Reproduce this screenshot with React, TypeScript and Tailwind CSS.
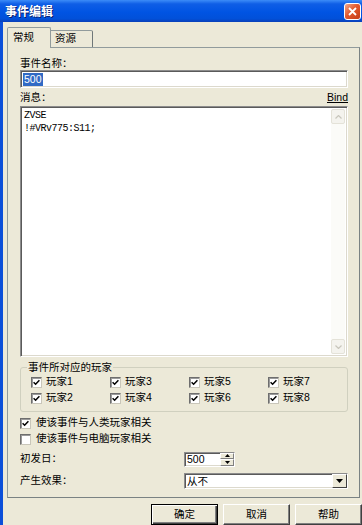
const players = ["玩家1", "玩家3", "玩家5", "玩家7", "玩家2", "玩家4", "玩家6", "玩家8"];

const sunken =
  "border border-t-[#8c8c8c] border-l-[#8c8c8c] border-b-white border-r-white shadow-[inset_1px_1px_0_#5a5a5a,inset_-1px_-1px_0_#dcd9cd]";

function Check({ checked }: { checked: boolean }) {
  return (
    <span className="flex h-[11px] w-[11px] shrink-0 items-center justify-center border border-t-[#6e6e6e] border-l-[#6e6e6e] border-b-[#c9c6ba] border-r-[#c9c6ba] bg-white shadow-[inset_1px_1px_0_#9a9a9a]">
      {checked && (
        <svg width="7" height="7" viewBox="0 0 7 7">
          <path d="M0.6 3.2 L2.6 5.2 L6.4 1.2" stroke="#000" strokeWidth="1.5" fill="none" />
        </svg>
      )}
    </span>
  );
}

function ScrollArrow({ up }: { up?: boolean }) {
  return (
    <div className="flex h-[15px] items-center justify-center rounded-[2px] border border-[#e4e2d8] bg-[#f4f3ee]">
      <svg width="7" height="4" viewBox="0 0 7 4">
        <path
          d={up ? "M0.5 3.5 L3.5 0.5 L6.5 3.5" : "M0.5 0.5 L3.5 3.5 L6.5 0.5"}
          stroke="#c8c6bc"
          strokeWidth="1.2"
          fill="none"
        />
      </svg>
    </div>
  );
}

function Button({ label, primary }: { label: string; primary?: boolean }) {
  return (
    <div
      className={`flex h-[21px] w-[67px] items-center justify-center bg-[#ece9d8] text-black ${
        primary
          ? "border border-black shadow-[inset_1px_1px_0_#fff,inset_-1px_-1px_0_#404040,inset_-2px_-2px_0_#808080]"
          : "border border-t-white border-l-white border-b-[#404040] border-r-[#404040] shadow-[inset_-1px_-1px_0_#808080]"
      }`}
    >
      {label}
    </div>
  );
}

export default function App() {
  return (
    <div className="flex h-[525px] w-[362px] flex-col overflow-hidden bg-[#ece9d8] font-['Liberation_Sans','Noto_Sans_CJK_SC',sans-serif] text-[10.5px] text-black">
      {/* title bar */}
      <div className="flex h-[22px] shrink-0 items-center justify-between bg-[linear-gradient(180deg,#3c8cf8_0%,#0f5ee6_18%,#0054e3_55%,#0150d9_85%,#0a3fb8_100%)] pl-[5px] pr-[1px]">
        <span className="font-['Noto_Sans_CJK_SC',sans-serif] text-[12px] font-bold leading-none text-white [text-shadow:1px_1px_0_#0a1e6e]">
          事件编辑
        </span>
        <div className="flex h-[17px] w-[17px] items-center justify-center rounded-[3px] border border-white bg-[linear-gradient(135deg,#f2a98c_0%,#e25a2f_45%,#c43c17_100%)]">
          <svg width="9" height="9" viewBox="0 0 9 9">
            <path d="M1 1 L8 8 M8 1 L1 8" stroke="#fff" strokeWidth="1.8" />
          </svg>
        </div>
      </div>

      <div className="flex-1 border-l-[3px] border-[#0b4fd9] pl-[4px] pt-[5px]">
        {/* tabs */}
        <div className="flex h-[20px] items-end">
          <div className="relative z-10 -mb-px flex h-[21px] w-[44px] items-center rounded-t-[2px] border border-b-0 border-[#919b9c] bg-[#ece9d8] pl-[5px]">
            常规
          </div>
          <div className="flex h-[17px] w-[42px] items-center rounded-tr-[2px] border border-b-0 border-l-0 border-[#919b9c] border-r-[#6f7778] bg-[#ece9d8] pl-[4px]">
            资源
          </div>
        </div>

        {/* panel */}
        <div className="h-[451px] w-[353px] border border-[#919b9c] border-r-[#7a8283] border-b-[#7a8283] pl-[12px] pt-[8px]">
          <div className="h-[14px] leading-[14px]">事件名称：</div>
          <div className={`flex h-[18px] w-[328px] items-center bg-white pl-[2px] ${sunken}`}>
            <span className="bg-[#316ac5] px-px leading-[13px] text-white">500</span>
          </div>

          <div className="flex h-[18px] w-[328px] items-center justify-between pt-[2px]">
            <span>消息：</span>
            <span className="underline">Bind</span>
          </div>
          <div className={`flex h-[251px] w-[328px] bg-white p-[2px] ${sunken}`}>
            <div className="flex-1 pl-px font-['Liberation_Mono',monospace] text-[10px] leading-[13px] tracking-[-0.5px]">
              <div>ZVSE</div>
              <div>!#VRv775:S11;</div>
            </div>
            <div className="flex w-[14px] flex-col justify-between bg-[#fbfbf8]">
              <ScrollArrow up />
              <ScrollArrow />
            </div>
          </div>

          <fieldset className="mt-[3px] w-[328px] rounded-[3px] border border-[#d0d0bf] pb-[5px]">
            <legend className="ml-[6px] h-[14px] px-[1px] leading-[14px]">事件所对应的玩家</legend>
            <div className="grid grid-cols-[repeat(4,79px)] pl-[10px]">
              {players.map((p) => (
                <div key={p} className="flex h-[16px] items-center gap-[4px]">
                  <Check checked />
                  <span>{p}</span>
                </div>
              ))}
            </div>
          </fieldset>

          <div className="mt-[3px] flex h-[16px] items-center gap-[5px]">
            <Check checked />
            <span>使该事件与人类玩家相关</span>
          </div>
          <div className="flex h-[16px] items-center gap-[5px]">
            <Check checked={false} />
            <span>使该事件与电脑玩家相关</span>
          </div>

          <div className="mt-[4px] flex h-[16px] items-center">
            <span className="w-[164px]">初发日：</span>
            <div className={`flex h-[15px] w-[51px] items-center bg-white pl-[2px] ${sunken}`}>
              <span className="flex-1 leading-none">500</span>
              <div className="flex h-full w-[14px] flex-col">
                {[true, false].map((up) => (
                  <div
                    key={String(up)}
                    className="flex flex-1 items-center justify-center border border-t-white border-l-white border-b-[#808080] border-r-[#808080] bg-[#ece9d8]"
                  >
                    <svg width="5" height="3" viewBox="0 0 5 3">
                      <path d={up ? "M0 3 L2.5 0 L5 3 Z" : "M0 0 L2.5 3 L5 0 Z"} fill="#000" />
                    </svg>
                  </div>
                ))}
              </div>
            </div>
          </div>

          <div className="mt-[6px] flex h-[16px] items-center">
            <span className="w-[164px]">产生效果：</span>
            <div className={`flex h-[16px] w-[164px] items-center bg-white pl-[2px] ${sunken}`}>
              <span className="flex-1 leading-none">从不</span>
              <div className="flex h-full w-[15px] items-center justify-center border border-t-white border-l-white border-b-[#404040] border-r-[#404040] bg-[#ece9d8]">
                <svg width="7" height="4" viewBox="0 0 7 4">
                  <path d="M0 0 L3.5 4 L7 0 Z" fill="#000" />
                </svg>
              </div>
            </div>
          </div>
        </div>

        {/* buttons */}
        <div className="mt-[6px] flex justify-end gap-[5px]">
          <Button label="确定" primary />
          <Button label="取消" />
          <Button label="帮助" />
        </div>
      </div>
    </div>
  );
}
